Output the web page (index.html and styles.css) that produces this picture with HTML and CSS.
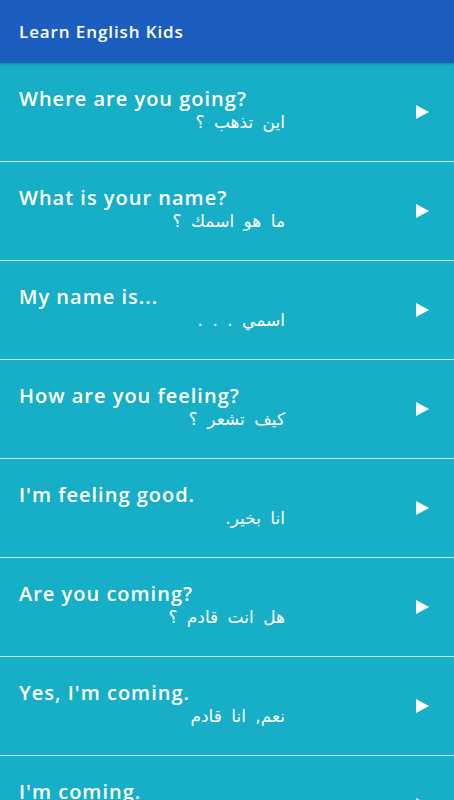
FILE: index.html
```html
<!DOCTYPE html>
<html lang="en">
<head>
<meta charset="utf-8">
<title>Learn English Kids</title>
<link rel="stylesheet" href="styles.css">
</head>
<body>
<header class="appbar">Learn English Kids</header>
<ul class="list">
  <li class="row"><div class="texts"><span class="en">Where are you going?</span><span class="ar" dir="rtl">اين تذهب ؟</span></div><span class="play"></span></li>
  <li class="row"><div class="texts"><span class="en">What is your name?</span><span class="ar" dir="rtl">ما هو اسمك ؟</span></div><span class="play"></span></li>
  <li class="row"><div class="texts"><span class="en">My name is...</span><span class="ar" dir="rtl">اسمي . . .</span></div><span class="play"></span></li>
  <li class="row"><div class="texts"><span class="en">How are you feeling?</span><span class="ar" dir="rtl">كيف تشعر ؟</span></div><span class="play"></span></li>
  <li class="row"><div class="texts"><span class="en">I'm feeling good.</span><span class="ar" dir="rtl">انا بخير.</span></div><span class="play"></span></li>
  <li class="row"><div class="texts"><span class="en">Are you coming?</span><span class="ar" dir="rtl">هل انت قادم ؟</span></div><span class="play"></span></li>
  <li class="row"><div class="texts"><span class="en">Yes, I'm coming.</span><span class="ar" dir="rtl">نعم, انا قادم</span></div><span class="play"></span></li>
  <li class="row"><div class="texts"><span class="en">I'm coming.</span><span class="ar" dir="rtl">انا قادم.</span></div><span class="play"></span></li>
</ul>
</body>
</html>
```

FILE: styles.css
```css
* { box-sizing: border-box; }
html, body {
  margin: 0;
  padding: 0;
  height: 800px;
  overflow: hidden;
  background: #17aec8;
}
.appbar {
  height: 63px;
  background: #1c5ebf;
  color: #ffffff;
  font-family: "Open Sans", "DejaVu Sans", sans-serif;
  font-weight: 600;
  font-size: 17px;
  letter-spacing: 0.9px;
  display: flex;
  align-items: center;
  padding-left: 19px;
  padding-bottom: 1px;
  box-shadow: 0 1px 2px rgba(0, 0, 0, 0.25);
  position: relative;
  z-index: 1;
}
.list {
  list-style: none;
  margin: 0;
  padding: 0;
}
.row {
  height: 99px;
  border-bottom: 1px solid #bfe7f0;
  display: flex;
  align-items: center;
  padding-left: 19px;
  padding-right: 25px;
  color: #ffffff;
}
.texts {
  width: 266px;
  display: flex;
  flex-direction: column;
  padding-bottom: 4px;
}
.en {
  font-family: "Open Sans", "DejaVu Sans", sans-serif;
  font-weight: 600;
  font-size: 20px;
  letter-spacing: 1px;
  line-height: 24px;
}
.ar {
  font-family: "DejaVu Sans", "Noto Sans", sans-serif;
  font-size: 17px;
  line-height: 22px;
  text-align: right;
  word-spacing: 4px;
}
.play {
  margin-left: auto;
  width: 0;
  height: 0;
  border-top: 7.5px solid transparent;
  border-bottom: 7.5px solid transparent;
  border-left: 13px solid #ffffff;
}
```
